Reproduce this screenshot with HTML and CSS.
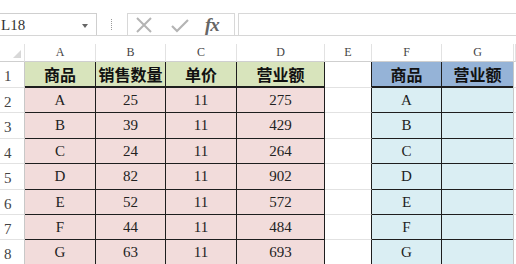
FILE: index.html
```html
<!DOCTYPE html>
<html lang="zh-CN">

<head>
    <meta charset="UTF-8">
    <title>Sheet1</title>
    <link rel="stylesheet" href="styles.css">
</head>

<body>
    <div class="toolbar">
        <div class="namebox">
            <span>L18</span>
            <span class="arrow"></span>
        </div>
        <div class="grip"></div>
        <div class="fbuttons">
            <svg class="ico-x" width="18" height="16" viewBox="0 0 18 16">
                <path d="M2 1 L16 15 M16 1 L2 15" stroke="#b4b4b4" stroke-width="2" fill="none" />
            </svg>
            <svg class="ico-ok" width="18" height="14" viewBox="0 0 18 14">
                <path d="M1 7 L6 12 L17 1" stroke="#b4b4b4" stroke-width="2.2" fill="none" />
            </svg>
            <span class="fx">fx</span>
        </div>
        <div class="formula"></div>
    </div>

    <div class="sheet">
        <div class="ch corner"><span class="tri"></span></div>
        <div class="ch">A</div>
        <div class="ch">B</div>
        <div class="ch">C</div>
        <div class="ch">D</div>
        <div class="ch">E</div>
        <div class="ch">F</div>
        <div class="ch">G</div>
        <div class="ch"></div>

        <div class="rh">1</div>
        <div class="c head-g">商品</div>
        <div class="c head-g">销售数量</div>
        <div class="c head-g">单价</div>
        <div class="c head-g">营业额</div>
        <div class="c blank top"></div>
        <div class="c head-b">商品</div>
        <div class="c head-b">营业额</div>
        <div class="c rest"></div>

        <div class="rh">2</div>
        <div class="c pink">A</div>
        <div class="c pink">25</div>
        <div class="c pink">11</div>
        <div class="c pink">275</div>
        <div class="c blank"></div>
        <div class="c blue">A</div>
        <div class="c blue"></div>
        <div class="c rest"></div>

        <div class="rh">3</div>
        <div class="c pink">B</div>
        <div class="c pink">39</div>
        <div class="c pink">11</div>
        <div class="c pink">429</div>
        <div class="c blank"></div>
        <div class="c blue">B</div>
        <div class="c blue"></div>
        <div class="c rest"></div>

        <div class="rh">4</div>
        <div class="c pink">C</div>
        <div class="c pink">24</div>
        <div class="c pink">11</div>
        <div class="c pink">264</div>
        <div class="c blank"></div>
        <div class="c blue">C</div>
        <div class="c blue"></div>
        <div class="c rest"></div>

        <div class="rh">5</div>
        <div class="c pink">D</div>
        <div class="c pink">82</div>
        <div class="c pink">11</div>
        <div class="c pink">902</div>
        <div class="c blank"></div>
        <div class="c blue">D</div>
        <div class="c blue"></div>
        <div class="c rest"></div>

        <div class="rh">6</div>
        <div class="c pink">E</div>
        <div class="c pink">52</div>
        <div class="c pink">11</div>
        <div class="c pink">572</div>
        <div class="c blank"></div>
        <div class="c blue">E</div>
        <div class="c blue"></div>
        <div class="c rest"></div>

        <div class="rh">7</div>
        <div class="c pink">F</div>
        <div class="c pink">44</div>
        <div class="c pink">11</div>
        <div class="c pink">484</div>
        <div class="c blank"></div>
        <div class="c blue">F</div>
        <div class="c blue"></div>
        <div class="c rest"></div>

        <div class="rh">8</div>
        <div class="c pink">G</div>
        <div class="c pink">63</div>
        <div class="c pink">11</div>
        <div class="c pink">693</div>
        <div class="c blank"></div>
        <div class="c blue">G</div>
        <div class="c blue"></div>
        <div class="c rest"></div>
    </div>
</body>

</html>
```

FILE: styles.css
```css
body {
    margin: 0;
    width: 516px;
    height: 264px;
    overflow: hidden;
    background-color: #fff;
    font-family: "Liberation Serif", "Noto Sans CJK SC", serif;
    color: #222;
}

/* formula bar */
.toolbar {
    display: flex;
    align-items: stretch;
    height: 22px;
    margin-top: 13px;
    border-bottom: 1px solid #d6d6d6;
}

.namebox {
    box-sizing: border-box;
    width: 97px;
    display: flex;
    align-items: center;
    justify-content: space-between;
    padding: 2px 8px 0 1px;
    border: 1px solid #cfcfcf;
    border-left: none;
    border-bottom: none;
    font-size: 15px;
    color: #333;
}

.arrow {
    width: 0;
    height: 0;
    border-left: 3px solid transparent;
    border-right: 3px solid transparent;
    border-top: 4px solid #666;
}

.grip {
    width: 0;
    height: 11px;
    margin: 6px 15px 0 14px;
    border-left: 1px dotted #999;
}

.fbuttons {
    box-sizing: border-box;
    width: 108px;
    display: flex;
    align-items: center;
    padding-left: 7px;
    border: 1px solid #d8d8d8;
    border-bottom: none;
}

.ico-x {
    margin-right: 18px;
}

.ico-ok {
    margin-right: 16px;
    margin-top: 2px;
}

.fx {
    font-family: "Liberation Serif", serif;
    font-style: italic;
    font-weight: bold;
    font-size: 19px;
    color: #666;
    letter-spacing: -1px;
}

.formula {
    flex: 1;
    margin-left: 3px;
    border: 1px solid #d8d8d8;
    border-right: none;
    border-bottom: none;
}

/* grid */
.sheet {
    display: grid;
    grid-template-columns: 25px 71px 70px 71px 88px 47px 70px 72px 1fr;
    grid-template-rows: 18px 26px 25px 26px 25px 26px 25px 25px 25px;
    margin-top: 8px;
}

.sheet > div {
    box-sizing: border-box;
    display: flex;
    align-items: center;
    justify-content: center;
}

.ch {
    font-size: 12px;
    color: #444;
    border-right: 1px solid #e2e2e2;
    border-bottom: 1px solid #cfcfcf;
}

.corner {
    position: relative;
}

.tri {
    position: absolute;
    right: 3px;
    bottom: 3px;
    width: 0;
    height: 0;
    border-left: 8px solid transparent;
    border-bottom: 8px solid #d8d8d8;
}

.sheet > .rh {
    justify-content: flex-start;
    padding: 4px 0 0 4px;
    font-size: 15px;
    color: #444;
    border-right: 1px solid #c8c8c8;
    border-bottom: 1px solid #e2e2e2;
}

.c {
    font-size: 15px;
    border-right: 1px solid #1e1e1e;
    border-bottom: 1px solid #1e1e1e;
}

.head-g,
.head-b {
    font-family: "Noto Sans CJK SC", sans-serif;
    font-weight: bold;
    font-size: 16px;
    color: #111;
    border-bottom-width: 2px;
}

.head-g {
    background-color: #d8e4bc;
}

.head-b {
    background-color: #95b3d7;
}

.pink {
    background-color: #f2dcdb;
}

.blue {
    background-color: #daeef3;
}

.sheet > .blank {
    border-bottom: 1px solid #e2e2e2;
}

.sheet > .rest {
    border-right: none;
    border-left: 1px solid #c8c8c8;
    border-bottom: 1px solid #e2e2e2;
    margin-left: -1px;
}
```
